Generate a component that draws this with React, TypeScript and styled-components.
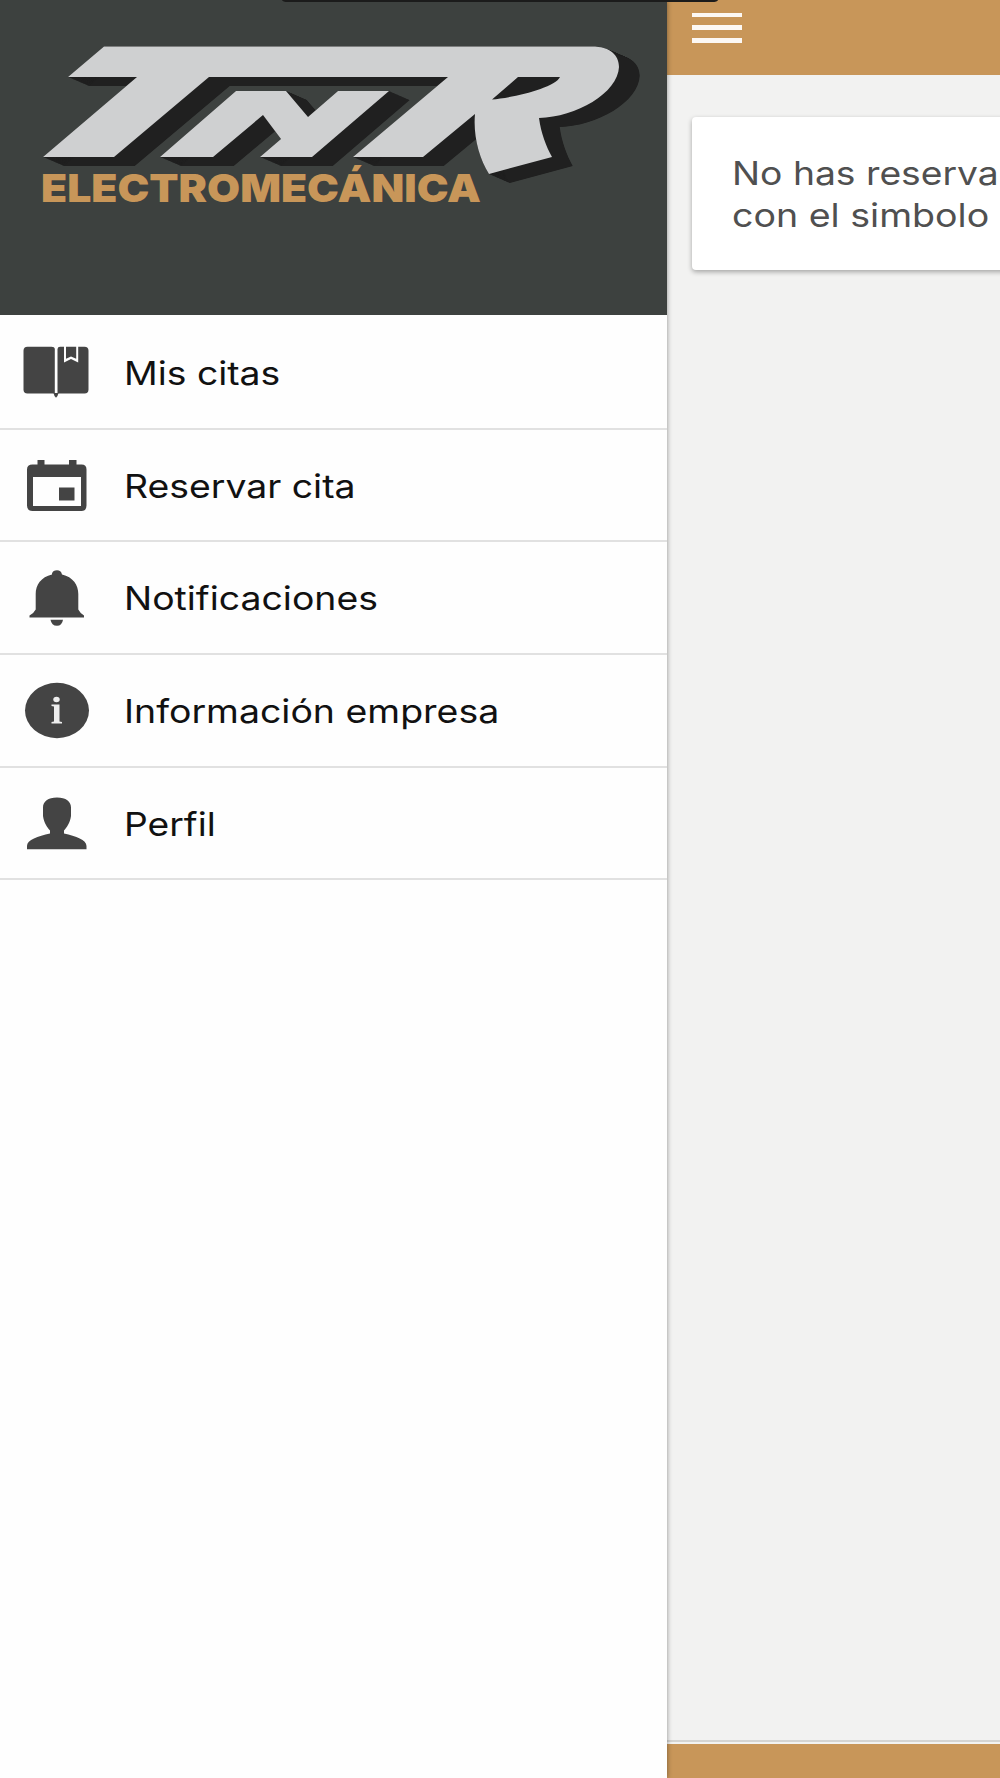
import React from "react";
import styled, { createGlobalStyle } from "styled-components";

const GlobalStyle = createGlobalStyle`
  * { box-sizing: border-box; }
  html, body { margin: 0; padding: 0; }
  body { font-family: Inter, "Liberation Sans", sans-serif; overflow: hidden; }
`;

const Screen = styled.div`
  position: relative;
  display: flex;
  width: 1000px;
  height: 1778px;
  overflow: hidden;
  background: #f2f2f1;
`;

const Notch = styled.div`
  position: absolute;
  top: 0;
  left: 282px;
  width: 436px;
  height: 2px;
  border-radius: 0 0 6px 6px / 0 0 2px 2px;
  background: #1b1b1b;
  z-index: 3;
`;

const Drawer = styled.aside`
  position: relative;
  z-index: 2;
  flex: 0 0 667.4px;
  display: flex;
  flex-direction: column;
  background: #fefefe;
  box-shadow: 0 0 5px rgba(0, 0, 0, 0.42);
`;

const Brand = styled.header`
  height: 315px;
  padding: 36px 0 0 32px;
  background: #3d413f;
  margin-bottom: 2px;
`;

const Logo = styled.svg`
  display: block;
  width: 620px;
  height: 150px;
  margin-bottom: -20px;
`;

const Tagline = styled.div<{ $stretch: number }>`
  width: max-content;
  margin-left: 9px;
  font-size: 38.5px;
  line-height: 44px;
  font-weight: 900;
  color: #c89659;
  transform: scaleX(${(p) => p.$stretch});
  transform-origin: left;
`;

const Menu = styled.nav`
  display: flex;
  flex-direction: column;
`;

const MenuItem = styled.a`
  display: flex;
  align-items: center;
  height: 112.7px;
  border-bottom: 2px solid #e1e1e1;
`;

const MenuIcon = styled.svg`
  flex: 0 0 124px;
  width: 124px;
  height: 110px;
  fill: #444;
`;

const Label = styled.span<{ $stretch: number }>`
  padding-top: 1px;
  font-size: 32.8px;
  line-height: 44px;
  font-weight: 430;
  color: #111;
  white-space: nowrap;
  transform: scaleX(${(p) => p.$stretch});
  transform-origin: left;
`;

const Page = styled.main`
  flex: 1;
  min-width: 0;
  display: flex;
  flex-direction: column;
`;

const TopBar = styled.div`
  height: 74.5px;
  padding: 12.5px 0 0 24.6px;
  background: #c89659;
`;

const Burger = styled.button`
  display: flex;
  flex-direction: column;
  gap: 8.2px;
  width: 50px;
  padding: 0;
  border: 0;
  background: none;
`;

const Bar = styled.span`
  height: 4.7px;
  background: #fcf8f4;
`;

const Content = styled.section`
  flex: 1;
  padding: 42.5px 0 0 24.6px;
`;

const Card = styled.article`
  width: 600px;
  height: 153px;
  padding: 34.6px 0 0 40px;
  border-radius: 4px;
  background: #fff;
  box-shadow: 0 2px 5px rgba(0, 0, 0, 0.32);
`;

const CardLine = styled.p<{ $stretch: number }>`
  width: max-content;
  margin: 0;
  font-size: 32.8px;
  line-height: 42.5px;
  color: #505050;
  white-space: nowrap;
  transform: scaleX(${(p) => p.$stretch});
  transform-origin: left;
`;

const BottomBar = styled.footer`
  height: 38px;
  border-top: 2px solid #d4d4d2;
  padding-top: 2px;
  background: #c89659 content-box;
`;

const LETTERS =
  "M104 46.5H592C610 46.5 619 55 619 67C618 93 576 117 539 118C541 133 546 146 552 157L489 174C479 158 473 135 475 114L423 157H353L448 77H209L114 157H43L137 77H68ZM518 77L492 99.5C512 98 555 88 560 77Z" +
  "M160 157L236 91H286L308 117L338 91H389L312 157H260L281 139L263 115L213 157Z";

const DEPTH = 42;

const BrandLogo = () => (
  <Logo viewBox="32 36 620 150">
    <g fill="#202020">
      {Array.from({ length: DEPTH + 1 }, (_, i) => (
        <path key={i} d={LETTERS} transform={`translate(${(i / DEPTH) * 20.7} ${(i / DEPTH) * 9})`} />
      ))}
      <path d="M518 77L492 100H530L562 77Z" />
    </g>
    <path d={LETTERS} fill="#cfd0d1" fillRule="evenodd" />
  </Logo>
);

const icons = {
  book: (
    <>
      <path d="M27.5 29.700H51.500Q54.500 29.700 54.800 32V76.500H27.500Q23.500 76.500 23.500 72.500V33.700Q23.500 29.700 27.500 29.700Z" />
      <path d="M57.500 32Q57.800 29.700 60 29.700H64V45.500L71 42L78.200 45.500V29.700H84.500Q88.500 29.700 88.500 33.700V72.500Q88.500 76.500 84.500 76.500H57.500Z" />
      <path d="M66 29.700H76.200V41.800L71 39.500L66 41.800Z" />
      <path d="M53.500 76H58.500L57.500 79L56 80.800L54.500 79Z" />
    </>
  ),
  calendar: (
    <>
      <path
        fillRule="evenodd"
        d="M37.500 30H44.500V34.500H69V30H76.500V34.500H81.500Q86.500 34.500 86.500 39.500V75.500Q86.500 81 81.500 81H32.500Q27 81 27 75.500V39.500Q27 34.500 32.500 34.500H37.500ZM33 47V76H81V47Z"
      />
      <path d="M59 57.500H74.500V70.500H59Z" />
    </>
  ),
  bell: (
    <>
      <path d="M52 30.500Q53 27.300 57 27.300Q61 27.300 62 31.500C73 34 78.300 42 78.300 51V66.500Q80 70 84 72.500V74.500H29.500V72.500Q34 70 35.700 66.500V51C35.700 42 41 34 52 31.500Z" />
      <path d="M50.500 76.800H63Q62 82.800 57 82.800Q51.500 82.800 50.500 76.800Z" />
    </>
  ),
  info: (
    <>
      <ellipse cx="57" cy="55.500" rx="32" ry="27.700" />
      <ellipse cx="56.500" cy="44.500" rx="3.200" ry="2.800" fill="#eee" />
      <path fill="#eee" d="M51.500 49.500H59.500V66.500L62 67V68.500H51.500V67L54 66.500V51.500L51.500 51Z" />
    </>
  ),
  person: (
    <path d="M57 29.500C66 29.500 71 33.500 71 39.500V48C70 55 67 59 64 62.500V65.500C76 68 86.500 72 86.500 78V81.200H27V78C27 72 38 68 50 65.500V62.500C47 59 44 55 43 48V39.500C43 33.500 48 29.500 57 29.500Z" />
  ),
};

const items: { icon: keyof typeof icons; label: string; stretch: number }[] = [
  { icon: "book", label: "Mis citas", stretch: 1.137 },
  { icon: "calendar", label: "Reservar cita", stretch: 1.139 },
  { icon: "bell", label: "Notificaciones", stretch: 1.14 },
  { icon: "info", label: "Información empresa", stretch: 1.142 },
  { icon: "person", label: "Perfil", stretch: 1.135 },
];

export default function App() {
  return (
    <>
      <GlobalStyle />
      <Screen>
        <Notch />
        <Drawer>
          <Brand>
            <BrandLogo />
            <Tagline $stretch={1.108}>ELECTROMECÁNICA</Tagline>
          </Brand>
          <Menu>
            {items.map((item) => (
              <MenuItem key={item.icon}>
                <MenuIcon viewBox="0 0 124 110">{icons[item.icon]}</MenuIcon>
                <Label $stretch={item.stretch}>{item.label}</Label>
              </MenuItem>
            ))}
          </Menu>
        </Drawer>
        <Page>
          <TopBar>
            <Burger aria-label="Menú">
              <Bar />
              <Bar />
              <Bar />
            </Burger>
          </TopBar>
          <Content>
            <Card>
              <CardLine $stretch={1.136}>No has reserva</CardLine>
              <CardLine $stretch={1.145}>con el simbolo</CardLine>
            </Card>
          </Content>
          <BottomBar />
        </Page>
      </Screen>
    </>
  );
}
